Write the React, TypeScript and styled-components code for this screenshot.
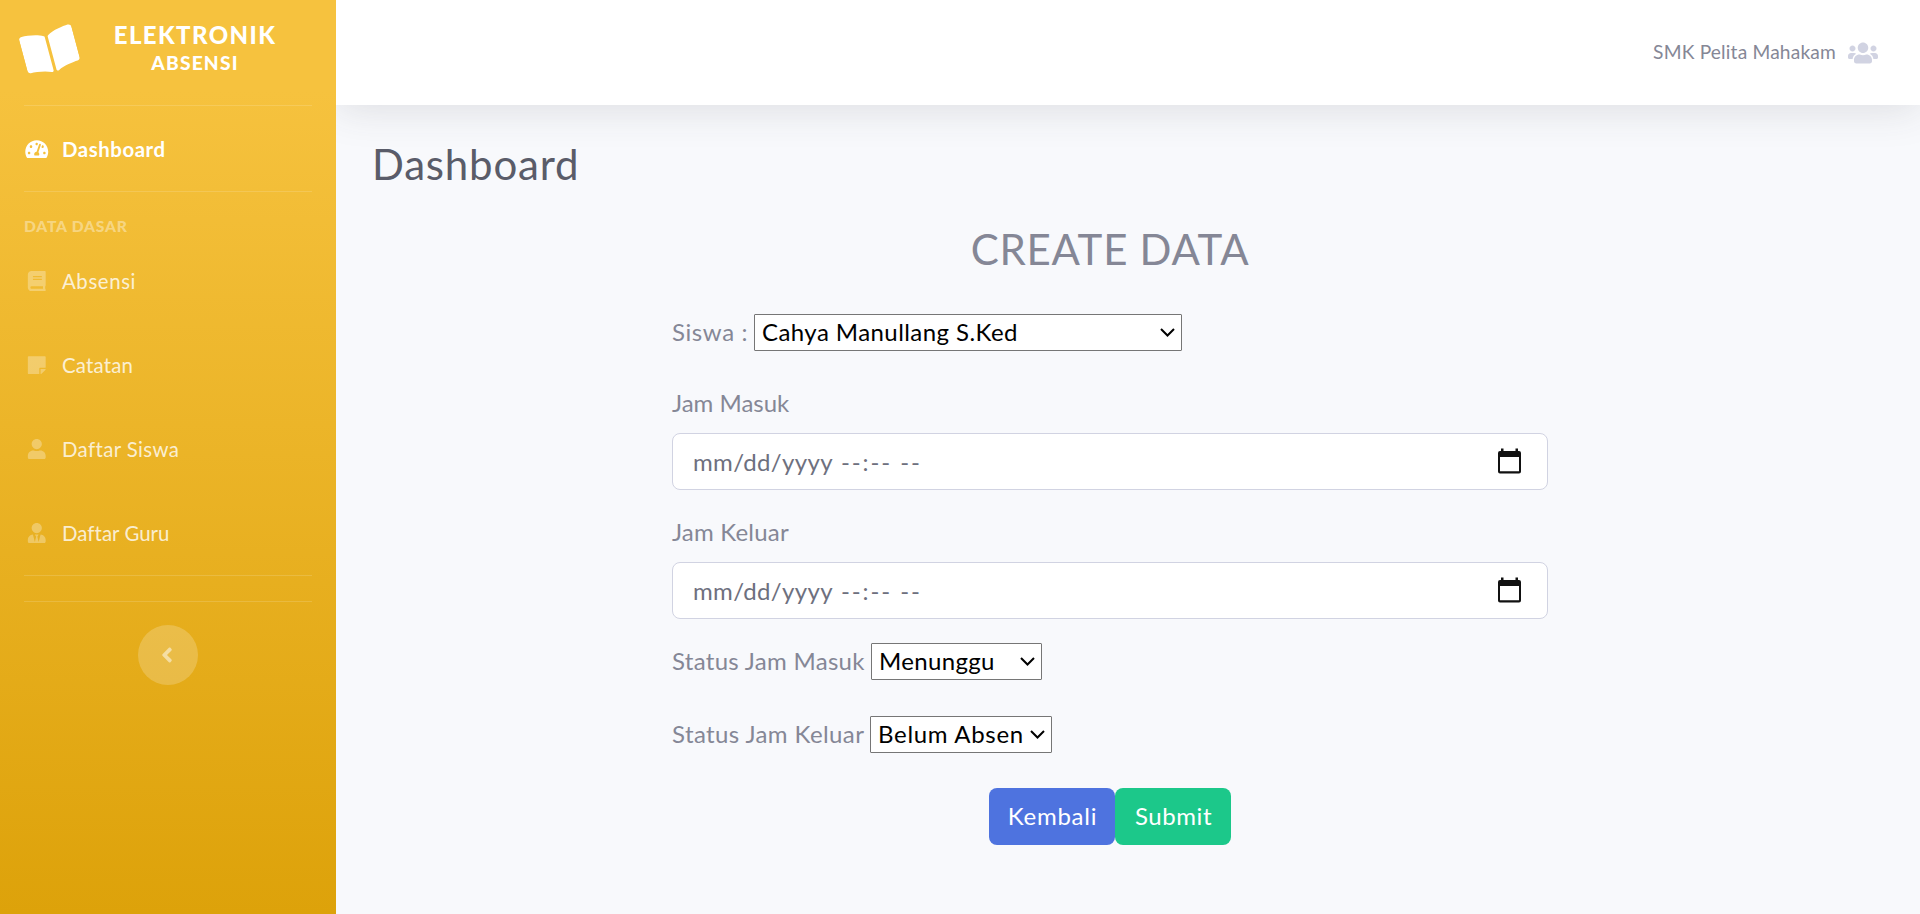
import React from "react";
import styled, { createGlobalStyle } from "styled-components";
import {
  FaAngleLeft,
  FaBook,
  FaBookOpen,
  FaStickyNote,
  FaTachometerAlt,
  FaUser,
  FaUserTie,
  FaUsers,
} from "react-icons/fa";

const GlobalStyle = createGlobalStyle`
  *, *::before, *::after { box-sizing: border-box; }
  body {
    margin: 0;
    font-family: Lato, "Open Sans", sans-serif;
    font-size: 24px;
    line-height: 36px;
    color: #858796;
    background: #f8f9fc;
    overflow: hidden;
  }
`;

const Page = styled.div`
  display: flex;
  height: 914px;
`;

const Sidebar = styled.nav`
  width: 336px;
  flex: none;
  display: flex;
  flex-direction: column;
  color: #fff;
  background: linear-gradient(180deg, #f6c23e 10%, #dda20a 100%);
`;

const Brand = styled.div`
  display: flex;
  align-items: center;
  height: 105px;
  padding: 0 0 7px 23px;
`;

const BrandIcon = styled(FaBookOpen)`
  flex: none;
  width: 54px;
  height: 48px;
  margin-top: 3px;
  transform: rotate(-15deg);
`;

const BrandText = styled.div`
  flex: 1;
  padding-right: 23px;
  text-align: center;
  font-weight: 900;
  font-size: 24px;
  line-height: 28px;
  letter-spacing: 1.4px;
`;

const BrandSub = styled.div`
  font-size: 19.2px;
  letter-spacing: 1.2px;
`;

const Divider = styled.hr<{ $gap?: number }>`
  width: 288px;
  height: 1px;
  margin: 0 24px ${p => p.$gap ?? 0}px;
  border: 0;
  flex: none;
  background: rgba(255, 255, 255, 0.15);
`;

const GroupTitle = styled.div`
  height: 24px;
  margin: 23px 24px 0;
  font-size: 15.6px;
  font-weight: 900;
  line-height: 23px;
  letter-spacing: 0.8px;
  color: rgba(255, 255, 255, 0.4);
`;

const NavItem = styled.a<{ $active?: boolean; $spacing: number }>`
  display: flex;
  align-items: center;
  height: 84px;
  padding: 0 24px;
  font-size: 20.4px;
  font-weight: ${p => (p.$active ? 700 : 400)};
  letter-spacing: ${p => p.$spacing}px;
  color: ${p => (p.$active ? "#fff" : "rgba(255, 255, 255, 0.8)")};

  svg {
    width: 25.5px;
    height: 20.4px;
    margin-right: 12.5px;
    color: ${p => (p.$active ? "#fff" : "rgba(255, 255, 255, 0.3)")};
  }
`;

const Toggle = styled.button`
  display: flex;
  align-items: center;
  justify-content: center;
  width: 60px;
  height: 60px;
  margin: 0 auto;
  padding: 0 3px 0 0;
  border: 0;
  border-radius: 50%;
  font-size: 24px;
  color: rgba(255, 255, 255, 0.5);
  background: rgba(255, 255, 255, 0.2);
`;

const Main = styled.div`
  flex: 1;
  display: flex;
  flex-direction: column;
  overflow: hidden;
`;

const Topbar = styled.header`
  display: flex;
  align-items: center;
  justify-content: flex-end;
  gap: 12px;
  flex: none;
  height: 105px;
  padding-right: 42px;
  font-size: 19.2px;
  letter-spacing: 0.17px;
  background: #fff;
  box-shadow: 0 3.6px 42px rgba(58, 59, 69, 0.15);

  svg {
    width: 30px;
    height: 24px;
    color: #d1d3e2;
  }
`;

const UserName = styled.span`
  padding-bottom: 2px;
`;

const PageTitle = styled.h1`
  margin: 34px 0 0 36px;
  font-size: 42px;
  font-weight: 400;
  line-height: 50px;
  letter-spacing: 0.8px;
  color: #5a5c69;
`;

const Form = styled.form`
  width: 876px;
  margin: 35px 0 0 336px;
  display: flex;
  flex-direction: column;
`;

const FormTitle = styled.h2`
  margin: 0 0 39px;
  text-align: center;
  font-size: 42px;
  font-weight: 400;
  line-height: 51px;
  letter-spacing: 0.71px;
`;

const InlineField = styled.div<{ $below: number }>`
  display: flex;
  align-items: center;
  height: 37px;
  margin-bottom: ${p => p.$below}px;
`;

const InlineLabel = styled.label<{ $width: number; $spacing: number }>`
  width: ${p => p.$width}px;
  padding-bottom: 1px;
  white-space: nowrap;
  letter-spacing: ${p => p.$spacing}px;
`;

const SelectBox = styled.div<{ $width: number; $spacing: number }>`
  display: flex;
  align-items: center;
  justify-content: space-between;
  width: ${p => p.$width}px;
  height: 37px;
  padding: 0 6px 1px 7px;
  border: 1px solid #767676;
  border-radius: 1px;
  white-space: nowrap;
  letter-spacing: ${p => p.$spacing}px;
  color: #000;
  background: #fff;
`;

const StackedField = styled.div`
  display: flex;
  flex-direction: column;
  gap: 12px;
  margin-bottom: 24px;
`;

const StackedLabel = styled.label<{ $spacing: number }>`
  height: 36px;
  letter-spacing: ${p => p.$spacing}px;
`;

const DateBox = styled.div`
  display: flex;
  align-items: center;
  justify-content: space-between;
  height: 57px;
  padding: 0 25px 0 20px;
  border: 1px solid #d1d3e2;
  border-radius: 8px;
  color: #6e707e;
  background: #fff;
`;

const DateParts = styled.span`
  display: flex;
  gap: 8px;
  letter-spacing: 0.35px;
`;

const Blank = styled.span`
  letter-spacing: 1.9px;
`;

const Actions = styled.div`
  display: flex;
  justify-content: center;
`;

const ActionButton = styled.button<{ $color: string; $width: number; $spacing: number }>`
  width: ${p => p.$width}px;
  height: 57px;
  padding: 0 0 1px 1px;
  border: 0;
  border-radius: 8px;
  font: inherit;
  letter-spacing: ${p => p.$spacing}px;
  color: #fff;
  background: ${p => p.$color};
`;

const Chevron = () => (
  <svg width="15" height="9" viewBox="0 0 15 9" fill="none" stroke="#000" strokeWidth="2">
    <path d="M1 1l6.5 6.5L14 1" />
  </svg>
);

const Calendar = () => (
  <svg width="25" height="27" viewBox="0 0 25 27" fill="#111">
    <path
      fillRule="evenodd"
      d="M4 .5h2.500V3h12V.5H21V3h1q2 0 2 2v18.500q0 2-2 2H3q-2 0-2-2V5q0-2 2-2h1zM3 9v14.300h19V9z"
    />
  </svg>
);

const DateField = ({ label, spacing }: { label: string; spacing: number }) => (
  <StackedField>
    <StackedLabel $spacing={spacing}>{label}</StackedLabel>
    <DateBox>
      <DateParts>
        <span>mm/dd/yyyy</span>
        <Blank>--:--</Blank>
        <Blank>--</Blank>
      </DateParts>
      <Calendar />
    </DateBox>
  </StackedField>
);

const menu = [
  { label: "Absensi", icon: FaBook, spacing: 0.6 },
  { label: "Catatan", icon: FaStickyNote, spacing: 0.19 },
  { label: "Daftar Siswa", icon: FaUser, spacing: 0.38 },
  { label: "Daftar Guru", icon: FaUserTie, spacing: 0.05 },
];

export default function App() {
  return (
    <Page>
      <GlobalStyle />
      <Sidebar>
        <Brand>
          <BrandIcon />
          <BrandText>
            ELEKTRONIK
            <BrandSub>ABSENSI</BrandSub>
          </BrandText>
        </Brand>
        <Divider $gap={1} />
        <NavItem $active $spacing={0.55}>
          <FaTachometerAlt />
          Dashboard
        </NavItem>
        <Divider />
        <GroupTitle>DATA DASAR</GroupTitle>
        {menu.map(({ label, icon: Icon, spacing }) => (
          <NavItem key={label} $spacing={spacing}>
            <Icon />
            {label}
          </NavItem>
        ))}
        <Divider $gap={25} />
        <Divider $gap={23} />
        <Toggle type="button">
          <FaAngleLeft />
        </Toggle>
      </Sidebar>
      <Main>
        <Topbar>
          <UserName>SMK Pelita Mahakam</UserName>
          <FaUsers />
        </Topbar>
        <PageTitle>Dashboard</PageTitle>
        <Form>
          <FormTitle>CREATE DATA</FormTitle>
          <InlineField $below={34}>
            <InlineLabel $width={82} $spacing={0.6}>Siswa :</InlineLabel>
            <SelectBox $width={428} $spacing={0.43}>
              Cahya Manullang S.Ked
              <Chevron />
            </SelectBox>
          </InlineField>
          <DateField label="Jam Masuk" spacing={0} />
          <DateField label="Jam Keluar" spacing={0.2} />
          <InlineField $below={36}>
            <InlineLabel $width={199} $spacing={0.3}>Status Jam Masuk</InlineLabel>
            <SelectBox $width={171} $spacing={0.35}>
              Menunggu
              <Chevron />
            </SelectBox>
          </InlineField>
          <InlineField $below={35}>
            <InlineLabel $width={198} $spacing={0.4}>Status Jam Keluar</InlineLabel>
            <SelectBox $width={182} $spacing={0.7}>
              Belum Absen
              <Chevron />
            </SelectBox>
          </InlineField>
          <Actions>
            <ActionButton type="button" $color="#4e73df" $width={126} $spacing={0.75}>Kembali</ActionButton>
            <ActionButton type="button" $color="#1cc88a" $width={116} $spacing={0.58}>Submit</ActionButton>
          </Actions>
        </Form>
      </Main>
    </Page>
  );
}
